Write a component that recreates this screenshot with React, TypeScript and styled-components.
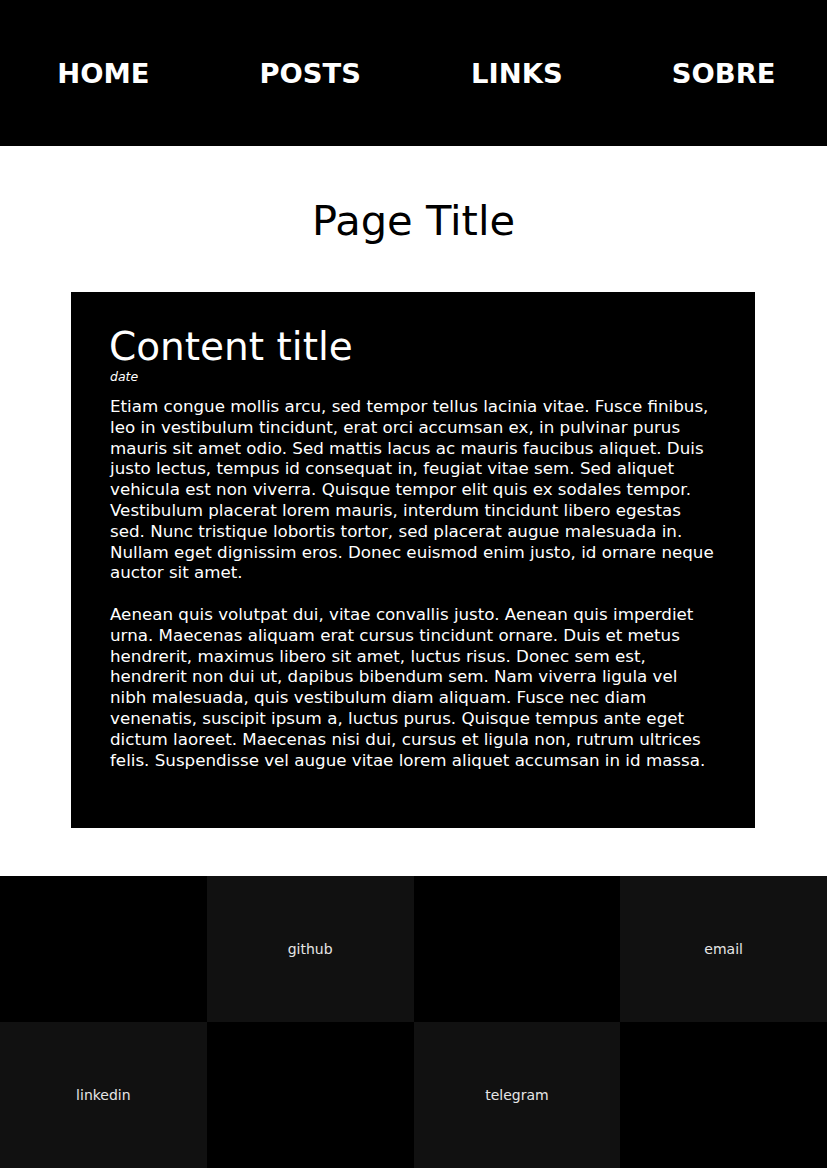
import { createGlobalStyle, styled } from 'styled-components';

const navItems = ['HOME', 'POSTS', 'LINKS', 'SOBRE'];

const links = [
	{ label: '', dark: false },
	{ label: 'github', dark: true },
	{ label: '', dark: false },
	{ label: 'email', dark: true },
	{ label: 'linkedin', dark: true },
	{ label: '', dark: false },
	{ label: 'telegram', dark: true },
	{ label: '', dark: false },
];

const paragraphs = [
	'Etiam congue mollis arcu, sed tempor tellus lacinia vitae. Fusce finibus, leo in vestibulum tincidunt, erat orci accumsan ex, in pulvinar purus mauris sit amet odio. Sed mattis lacus ac mauris faucibus aliquet. Duis justo lectus, tempus id consequat in, feugiat vitae sem. Sed aliquet vehicula est non viverra. Quisque tempor elit quis ex sodales tempor. Vestibulum placerat lorem mauris, interdum tincidunt libero egestas sed. Nunc tristique lobortis tortor, sed placerat augue malesuada in. Nullam eget dignissim eros. Donec euismod enim justo, id ornare neque auctor sit amet.',
	'Aenean quis volutpat dui, vitae convallis justo. Aenean quis imperdiet urna. Maecenas aliquam erat cursus tincidunt ornare. Duis et metus hendrerit, maximus libero sit amet, luctus risus. Donec sem est, hendrerit non dui ut, dapibus bibendum sem. Nam viverra ligula vel nibh malesuada, quis vestibulum diam aliquam. Fusce nec diam venenatis, suscipit ipsum a, luctus purus. Quisque tempus ante eget dictum laoreet. Maecenas nisi dui, cursus et ligula non, rutrum ultrices felis. Suspendisse vel augue vitae lorem aliquet accumsan in id massa.',
];

const App = () => {
	return (
		<>
			<GlobalStyle />
			<Header>
				{navItems.map((item) => (
					<NavItem key={item}>{item}</NavItem>
				))}
			</Header>
			<TitleSection>
				<PageTitle>Page Title</PageTitle>
			</TitleSection>
			<ContentBox>
				<ContentTitle>Content title</ContentTitle>
				<DateText>date</DateText>
				{paragraphs.map((text, index) => (
					<Paragraph key={index}>{text}</Paragraph>
				))}
			</ContentBox>
			<Footer>
				{links.map((link, index) => (
					<FooterCell key={index} $dark={link.dark}>
						{link.label}
					</FooterCell>
				))}
			</Footer>
		</>
	);
};

export default App;

const GlobalStyle = createGlobalStyle`
	* {
		box-sizing: border-box;
	}

	body {
		margin: 0;
		background: #ffffff;
		font-family: 'DejaVu Sans', 'Liberation Sans', sans-serif;
	}
`;

const Header = styled.header`
	height: 146px;
	background-color: #000000;
	display: grid;
	grid-template-columns: repeat(4, 1fr);
	align-items: center;
	justify-items: center;
`;

const NavItem = styled.a`
	color: #ffffff;
	font-size: 27.4px;
	font-weight: bold;
	cursor: pointer;
`;

const TitleSection = styled.section`
	height: 146px;
	padding-top: 3px;
	display: flex;
	align-items: center;
	justify-content: center;
`;

const PageTitle = styled.h1`
	margin: 0;
	font-size: 41.6px;
	font-weight: normal;
	color: #000000;
`;

const ContentBox = styled.article`
	margin: 0 72px 48px 71px;
	height: 536px;
	background-color: #000000;
	color: #ffffff;
	padding: 32px 38px 0 38px;
`;

const ContentTitle = styled.h2`
	margin: 0;
	font-size: 39px;
	font-weight: normal;
	line-height: normal;
`;

const DateText = styled.div`
	font-size: 12.5px;
	font-style: italic;
	margin: 0 0 12px 1px;
`;

const Paragraph = styled.p`
	margin: 0 0 20.8px 1px;
	font-size: 16.7px;
	line-height: 20.8px;
`;

const Footer = styled.footer`
	display: grid;
	grid-template-columns: repeat(4, 1fr);
	grid-auto-rows: 146px;
`;

const FooterCell = styled.div<{ $dark: boolean }>`
	background-color: ${({ $dark }) => ($dark ? '#111111' : '#000000')};
	color: #e6e6e6;
	font-size: 14px;
	display: flex;
	align-items: center;
	justify-content: center;
`;
